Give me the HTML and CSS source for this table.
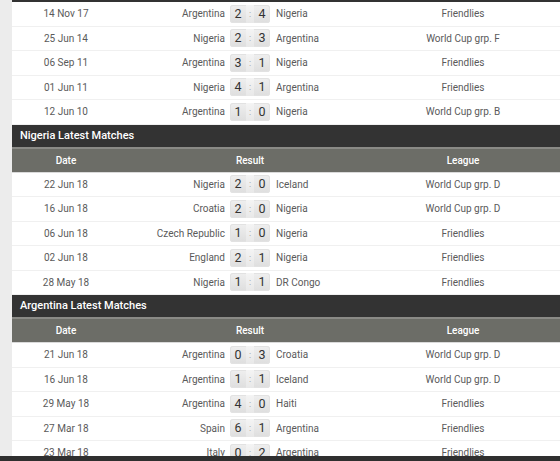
FILE: index.html
```html
<!DOCTYPE html>
<html>
<head>
<meta charset="utf-8">
<link rel="stylesheet" href="styles.css">
</head>
<body>
<div class="page">
  <div class="gutter"></div>
  <div class="content">
    <div class="section first">
      <div class="row"><span class="date">14 Nov 17</span><span class="home">Argentina</span><span class="score"><b>2</b><i>:</i><b>4</b></span><span class="away">Nigeria</span><span class="league">Friendlies</span></div>
      <div class="row"><span class="date">25 Jun 14</span><span class="home">Nigeria</span><span class="score"><b>2</b><i>:</i><b>3</b></span><span class="away">Argentina</span><span class="league">World Cup grp. F</span></div>
      <div class="row"><span class="date">06 Sep 11</span><span class="home">Argentina</span><span class="score"><b>3</b><i>:</i><b>1</b></span><span class="away">Nigeria</span><span class="league">Friendlies</span></div>
      <div class="row"><span class="date">01 Jun 11</span><span class="home">Nigeria</span><span class="score"><b>4</b><i>:</i><b>1</b></span><span class="away">Argentina</span><span class="league">Friendlies</span></div>
      <div class="row"><span class="date">12 Jun 10</span><span class="home">Argentina</span><span class="score"><b>1</b><i>:</i><b>0</b></span><span class="away">Nigeria</span><span class="league">World Cup grp. B</span></div>
    </div>

    <div class="section">
      <div class="title">Nigeria Latest Matches</div>
      <div class="row head"><span class="date">Date</span><span class="result">Result</span><span class="league">League</span></div>
      <div class="row"><span class="date">22 Jun 18</span><span class="home">Nigeria</span><span class="score"><b>2</b><i>:</i><b>0</b></span><span class="away">Iceland</span><span class="league">World Cup grp. D</span></div>
      <div class="row"><span class="date">16 Jun 18</span><span class="home">Croatia</span><span class="score"><b>2</b><i>:</i><b>0</b></span><span class="away">Nigeria</span><span class="league">World Cup grp. D</span></div>
      <div class="row"><span class="date">06 Jun 18</span><span class="home">Czech Republic</span><span class="score"><b>1</b><i>:</i><b>0</b></span><span class="away">Nigeria</span><span class="league">Friendlies</span></div>
      <div class="row"><span class="date">02 Jun 18</span><span class="home">England</span><span class="score"><b>2</b><i>:</i><b>1</b></span><span class="away">Nigeria</span><span class="league">Friendlies</span></div>
      <div class="row"><span class="date">28 May 18</span><span class="home">Nigeria</span><span class="score"><b>1</b><i>:</i><b>1</b></span><span class="away">DR Congo</span><span class="league">Friendlies</span></div>
    </div>

    <div class="section">
      <div class="title">Argentina Latest Matches</div>
      <div class="row head"><span class="date">Date</span><span class="result">Result</span><span class="league">League</span></div>
      <div class="row"><span class="date">21 Jun 18</span><span class="home">Argentina</span><span class="score"><b>0</b><i>:</i><b>3</b></span><span class="away">Croatia</span><span class="league">World Cup grp. D</span></div>
      <div class="row"><span class="date">16 Jun 18</span><span class="home">Argentina</span><span class="score"><b>1</b><i>:</i><b>1</b></span><span class="away">Iceland</span><span class="league">World Cup grp. D</span></div>
      <div class="row"><span class="date">29 May 18</span><span class="home">Argentina</span><span class="score"><b>4</b><i>:</i><b>0</b></span><span class="away">Haiti</span><span class="league">Friendlies</span></div>
      <div class="row"><span class="date">27 Mar 18</span><span class="home">Spain</span><span class="score"><b>6</b><i>:</i><b>1</b></span><span class="away">Argentina</span><span class="league">Friendlies</span></div>
      <div class="row"><span class="date">23 Mar 18</span><span class="home">Italy</span><span class="score"><b>0</b><i>:</i><b>2</b></span><span class="away">Argentina</span><span class="league">Friendlies</span></div>
    </div>
  </div>
  <div class="bottom-bar"></div>
</div>
</body>
</html>
```

FILE: styles.css
```css
html, body {
  margin: 0;
  padding: 0;
  background: #ffffff;
}
body {
  font-family: Roboto, "Liberation Sans", sans-serif;
  font-size: 10px;
  color: #5a5a5a;
}
.page {
  position: relative;
  width: 560px;
  height: 461px;
  overflow: hidden;
  display: flex;
}
.gutter {
  width: 12px;
  flex: none;
  background: #ececec;
}
.content {
  flex: 1;
  display: flex;
  flex-direction: column;
}
.section.first {
  border-top: 2px solid #333333;
}
.title {
  height: 22px;
  line-height: 22px;
  background: #333333;
  color: #ffffff;
  font-size: 11px;
  font-weight: 500;
  padding-left: 8px;
  border-bottom: 2px solid #8a8a86;
}
.row {
  display: grid;
  grid-template-columns: 108px 110px 40px 96px 194px;
  align-items: center;
  height: 23.5px;
  border-bottom: 1px solid #f0f0f0;
}
.row.head {
  height: 23px;
  background: #6c6d67;
  color: #ffffff;
  font-weight: 500;
  border-bottom: 1px solid #dadada;
}
.date {
  grid-column: 1;
  text-align: center;
}
.home {
  grid-column: 2;
  text-align: right;
  padding-right: 5px;
  white-space: nowrap;
}
.score {
  grid-column: 3;
  display: flex;
  height: 18px;
  border-radius: 3px;
  overflow: hidden;
  background: linear-gradient(#efefef, #dedede);
  box-shadow: inset 0 0 0 1px #e2e2e2;
  color: #333333;
  font-size: 12.5px;
  line-height: 18px;
}
.score b {
  font-weight: normal;
  width: 16px;
  text-align: center;
}
.score i {
  font-style: normal;
  width: 8px;
  text-align: center;
  font-size: 9px;
  color: #999999;
  background: linear-gradient(#f4f4f4, #e8e8e8);
}
.away {
  grid-column: 4;
  padding-left: 6px;
  white-space: nowrap;
}
.result {
  grid-column: 3;
  justify-self: center;
  white-space: nowrap;
}
.league {
  grid-column: 5;
  text-align: center;
}
.bottom-bar {
  position: absolute;
  left: 0;
  right: 0;
  bottom: 0;
  height: 5px;
  background: #2f2f2f;
}
```
